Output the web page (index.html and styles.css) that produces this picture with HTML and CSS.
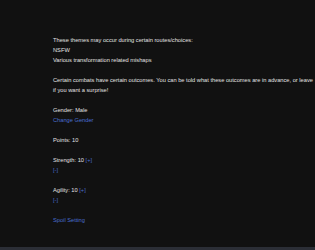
FILE: index.html
```html
<!DOCTYPE html>
<html lang="en">
<head>
    <meta charset="UTF-8">
    <meta name="viewport" content="width=device-width, initial-scale=1.0">
    <title>Settings</title>
    <link rel="stylesheet" href="styles.css">
</head>
<body>

<main class="story">
    <div class="block">
        These themes may occur during certain routes/choices:<br>
        NSFW<br>
        Various transformation related mishaps
    </div>

    <div class="block">
        Certain combats have certain outcomes. You can be told what these outcomes are in advance, or leave<br>
        if you want a surprise!
    </div>

    <div class="block">
        Gender: Male<br>
        <a href="#">Change Gender</a>
    </div>

    <div class="block">Points: 10</div>

    <div class="block">
        Strength: 10 <a href="#">[+]</a><br>
        <a href="#">[-]</a>
    </div>

    <div class="block">
        Agility: 10 <a href="#">[+]</a><br>
        <a href="#">[-]</a>
    </div>

    <div class="block">
        <a href="#">Spoil Setting</a>
    </div>
</main>

<footer class="bar"></footer>

</body>
</html>
```

FILE: styles.css
```css
html, body {
    height: 100%;
    overflow: hidden;
}
body {
    margin: 0;
    background-color: #111111;
    color: #e2e2e2;
    font-family: "Liberation Sans", Arial, sans-serif;
    font-size: 5.7px;
    line-height: 10px;
    display: flex;
    flex-direction: column;
}
.story {
    flex: 1;
    min-width: 0;
    overflow: hidden;
    padding: 35px 0 0 53px;
    white-space: nowrap;
}
.block {
    margin-bottom: 10px;
}
a {
    color: #4a6fd0;
    text-decoration: none;
}
.bar {
    height: 3px;
    background-color: #2b2e36;
}
```
